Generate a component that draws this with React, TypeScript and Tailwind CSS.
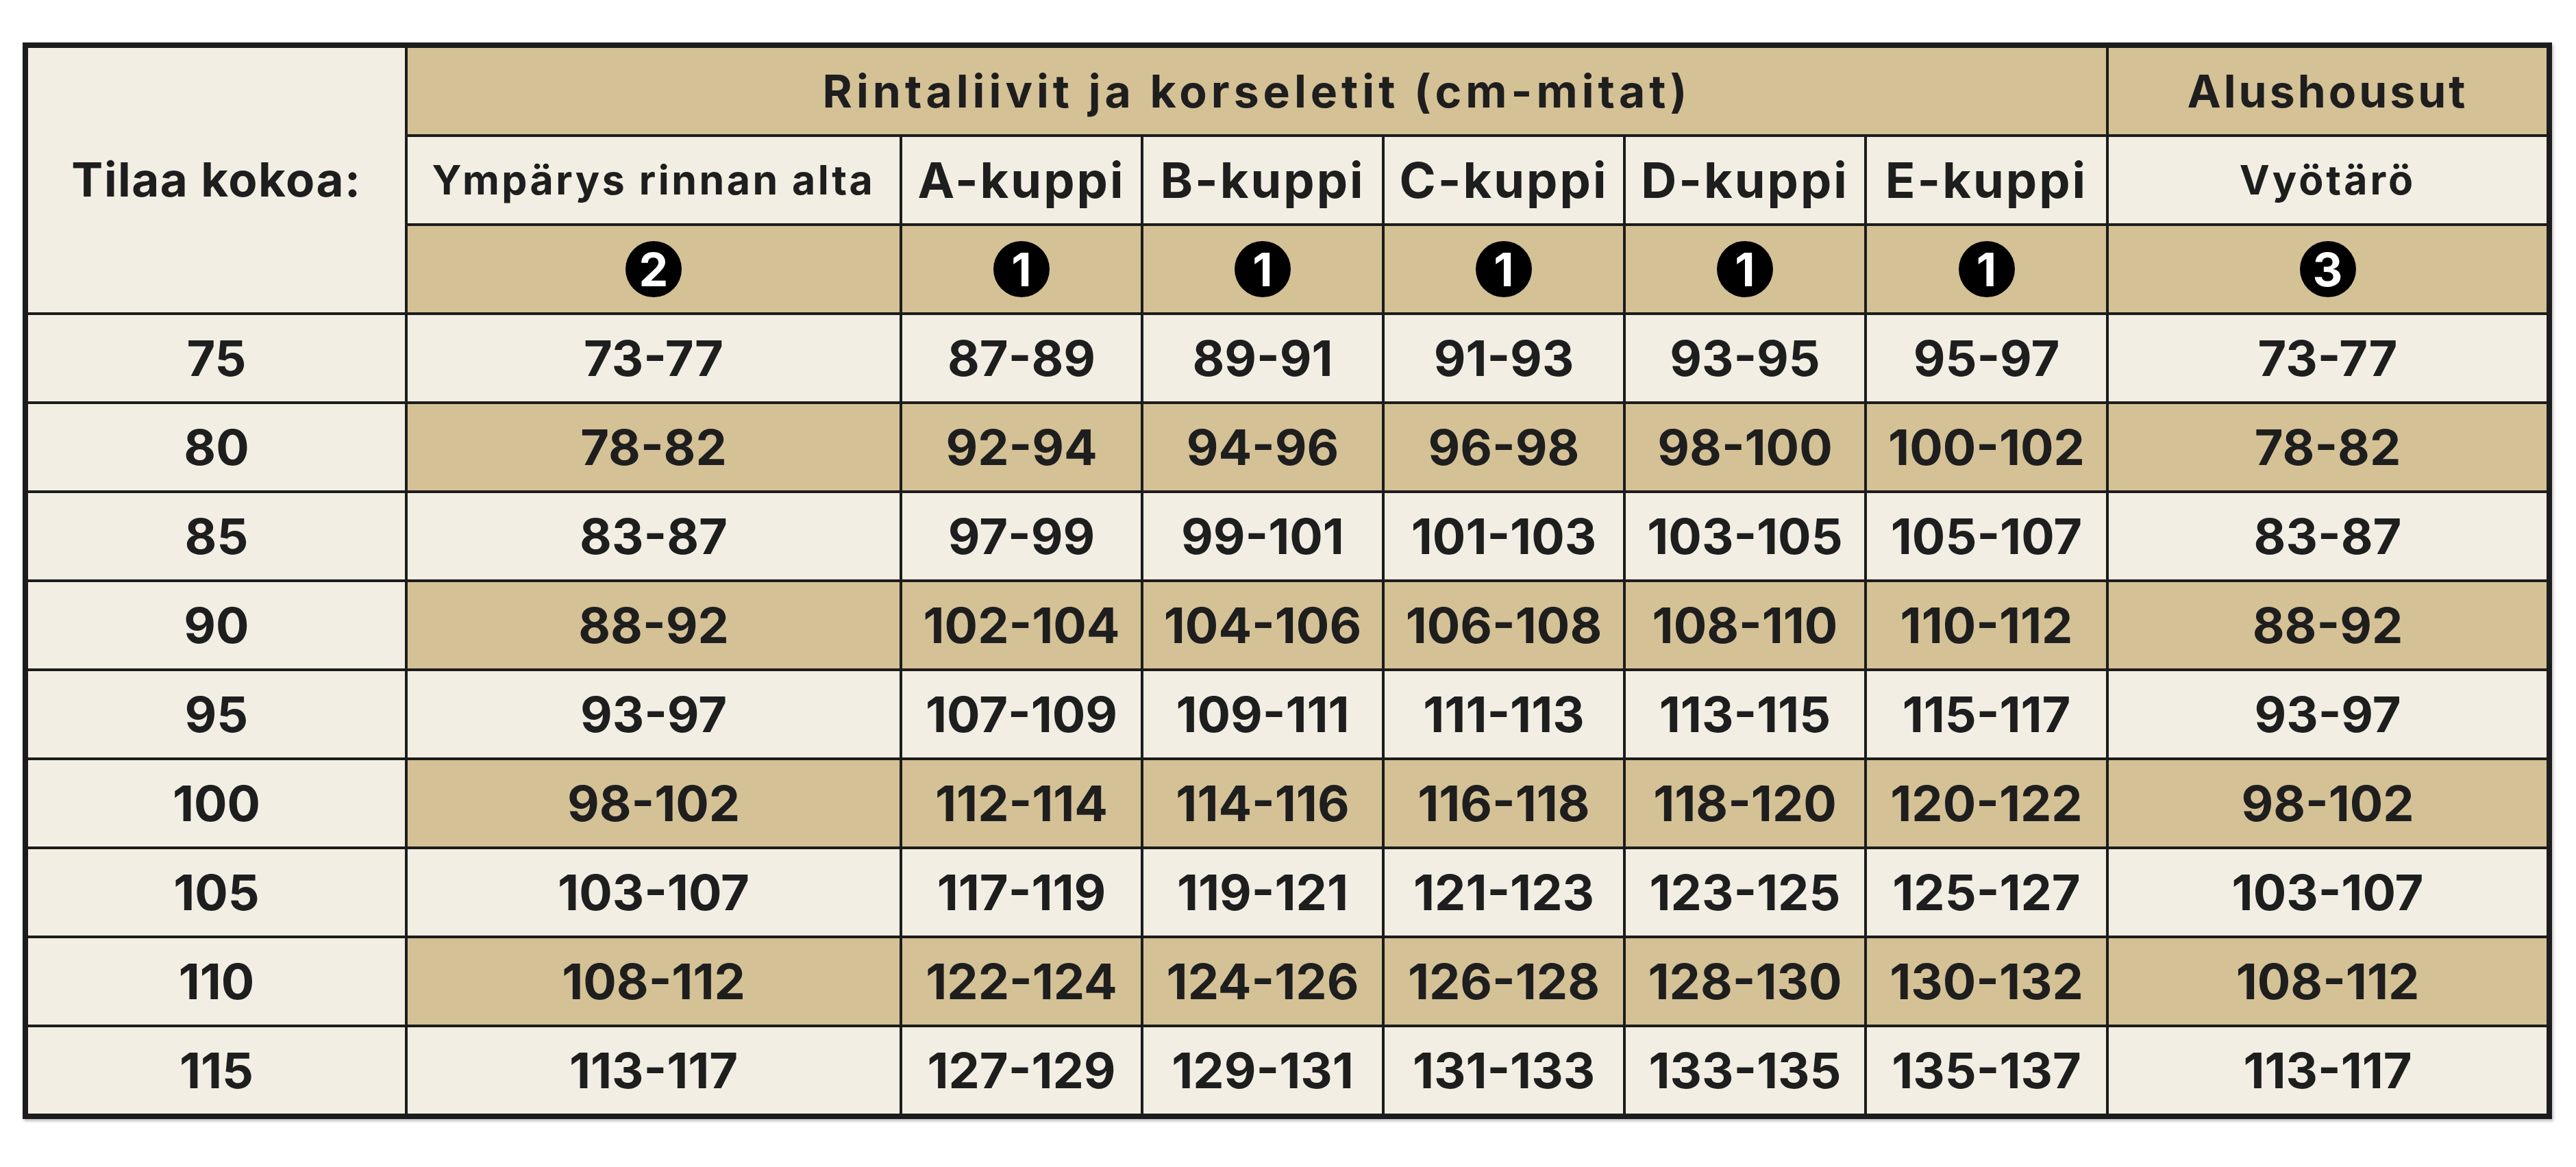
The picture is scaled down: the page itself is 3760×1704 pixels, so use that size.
const sizes = [75, 80, 85, 90, 95, 100, 105, 110, 115]

const cream = 'bg-[#f2eee3]'
const tan = 'bg-[#d4c195]'

function Cell({
  children,
  shade,
  className = '',
}: {
  children?: React.ReactNode
  shade: 'cream' | 'tan'
  className?: string
}) {
  return (
    <div
      className={`flex items-center justify-center ${shade === 'tan' ? tan : cream} ${className}`}
    >
      {children}
    </div>
  )
}

function Badge({ n }: { n: number }) {
  return (
    <div className="flex h-[82px] w-[82px] items-center justify-center rounded-full bg-black text-[68px] leading-none text-white">
      {n}
    </div>
  )
}

export default function App() {
  const cups = ['A', 'B', 'C', 'D', 'E']
  const badges = [2, 1, 1, 1, 1, 1, 3]

  return (
    <div className="min-h-screen bg-white pl-[33px] pt-[62px] font-['Inter',sans-serif] font-bold text-[#1e1e1e]">
      <div className="grid w-fit grid-cols-[550px_718px_348px_348px_348px_348px_349px_639px] grid-rows-[repeat(12,126px)] gap-[4px] border-[8px] border-[#1c1c1c] bg-[#1c1c1c] shadow-[2px_3px_4px_rgba(0,0,0,0.25)]">
        {/* header */}
        <Cell shade="cream" className="row-span-3 text-[69px] tracking-[1.5px]">
          Tilaa kokoa:
        </Cell>
        <Cell shade="tan" className="col-span-6 text-[66px] tracking-[6px]">
          Rintaliivit ja korseletit (cm-mitat)
        </Cell>
        <Cell shade="tan" className="text-[66px] tracking-[4px]">
          Alushousut
        </Cell>

        <Cell shade="cream" className="text-[59px] tracking-[3.5px]">
          Ympärys rinnan alta
        </Cell>
        {cups.map((c) => (
          <Cell key={c} shade="cream" className="text-[72px] tracking-[3px]">
            {c}-kuppi
          </Cell>
        ))}
        <Cell shade="cream" className="text-[59px] tracking-[4px]">
          Vyötärö
        </Cell>

        {badges.map((b, i) => (
          <Cell key={i} shade="tan">
            <Badge n={b} />
          </Cell>
        ))}

        {/* size rows */}
        {sizes.map((s, r) => {
          const shade = r % 2 === 1 ? 'tan' : 'cream'
          const values = [
            `${s - 2}-${s + 2}`,
            ...cups.map((_, i) => `${s + 12 + i * 2}-${s + 14 + i * 2}`),
            `${s - 2}-${s + 2}`,
          ]
          return [
            <Cell key={`s${s}`} shade="cream" className="text-[72px]">
              {s}
            </Cell>,
            ...values.map((v, i) => (
              <Cell key={`${s}-${i}`} shade={shade} className="text-[72px]">
                {v}
              </Cell>
            )),
          ]
        })}
      </div>
    </div>
  )
}
